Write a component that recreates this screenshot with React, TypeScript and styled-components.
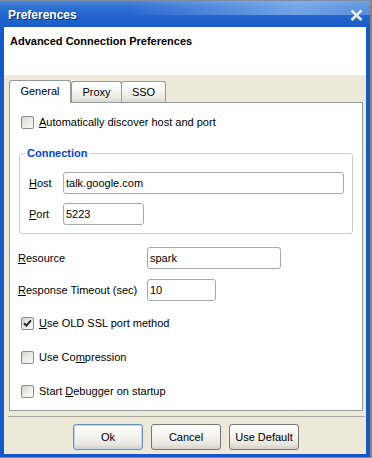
import React, { FC } from "react";
import styled, { createGlobalStyle } from "styled-components";

const GlobalStyle = createGlobalStyle`
  body {
    margin: 0;
    font-family: "Liberation Sans", Arial, sans-serif;
    font-size: 11px;
    color: #000;
  }
`;

const Window = styled.div`
  width: 372px;
  height: 458px;
  box-sizing: border-box;
  display: flex;
  flex-direction: column;
  border-top: 1px solid #7d8ca3;
  border-right: 2px solid #858585;
  border-bottom: 1px solid #8a8a8a;
  background: #1559c6;
`;

const TitleBar = styled.div`
  height: 26px;
  flex: none;
  box-sizing: border-box;
  display: flex;
  align-items: center;
  justify-content: space-between;
  padding: 2px 6px 0 8px;
  background: linear-gradient(
        100deg,
        rgba(255, 255, 255, 0) 35%,
        rgba(175, 210, 248, 0.55) 80%,
        rgba(175, 210, 248, 0.35) 100%
      )
      top / 100% 55% no-repeat,
    linear-gradient(to bottom, #4f88da 0%, #3172d3 20%, #2466cd 55%, #1a5dc8 100%);
`;

const Title = styled.span`
  color: #fff;
  font-weight: bold;
  font-size: 12px;
  text-shadow: 1px 1px 0 #0c2f70;
`;

const Client = styled.div`
  flex: 1;
  display: flex;
  flex-direction: column;
  border-left: 4px solid #1559c6;
  border-right: 4px solid #1559c6;
  border-bottom: 3px solid #1559c6;
`;

const Header = styled.div`
  height: 48px;
  flex: none;
  box-sizing: border-box;
  padding: 7px 6px 0;
  background: #fff;
  font-weight: bold;
  line-height: 14px;
`;

const Body = styled.div`
  flex: 1;
  display: flex;
  flex-direction: column;
  padding: 5px 3px 4px 5px;
  background: #ece9d8;
`;

const TabRow = styled.div`
  display: flex;
  align-items: flex-end;
  height: 22px;
`;

const Tab = styled.div<{ $active?: boolean; $width: number; $shift?: number }>`
  box-sizing: border-box;
  width: ${(p) => p.$width}px;
  height: ${(p) => (p.$active ? 23 : 21)}px;
  margin-bottom: ${(p) => (p.$active ? -1 : 0)}px;
  margin-left: ${(p) => p.$shift ?? 0}px;
  position: relative;
  z-index: ${(p) => (p.$active ? 1 : 0)};
  display: flex;
  align-items: center;
  justify-content: center;
  padding-bottom: ${(p) => (p.$active ? 2 : 0)}px;
  border: 1px solid #919b9c;
  border-bottom: none;
  border-radius: 3px 3px 0 0;
  background: ${(p) =>
    p.$active
      ? "#fff"
      : "linear-gradient(to bottom, #fff 0%, #f6f5f1 45%, #e9e7df 80%, #dcd9ce 100%)"};
`;

const Panel = styled.div`
  height: 309px;
  box-sizing: border-box;
  border: 1px solid #919b9c;
  background: #fff;
  display: flex;
  flex-direction: column;
`;

const CheckRow = styled.label<{ $top: number }>`
  display: flex;
  align-items: center;
  gap: 5px;
  height: 14px;
  margin-top: ${(p) => p.$top}px;
  padding-left: 11px;
  line-height: 14px;
`;

const Box = styled.span`
  width: 13px;
  height: 13px;
  box-sizing: border-box;
  border: 1px solid #8b8b88;
  border-radius: 2px;
  background: linear-gradient(135deg, #d4d1c8 0%, #ebeae5 45%, #f9f9f7 100%);
  display: flex;
  align-items: center;
  justify-content: center;
`;

const Group = styled.fieldset`
  width: 334px;
  box-sizing: border-box;
  margin: 18px 0 0 9px;
  padding: 0 0 8px;
  border: 1px solid #d0d0bf;
  border-radius: 3px;
  min-inline-size: 0;
`;

const Legend = styled.legend`
  margin-left: 5px;
  padding: 0 2px;
  color: #0046d5;
  font-weight: bold;
  line-height: 13px;
`;

const FieldRow = styled.div<{ $top: number; $indent: number }>`
  display: flex;
  align-items: center;
  height: 22px;
  margin-top: ${(p) => p.$top}px;
  padding-left: ${(p) => p.$indent}px;
`;

const Label = styled.span<{ $width: number }>`
  width: ${(p) => p.$width}px;
  flex: none;
`;

const Input = styled.input<{ $width: number }>`
  width: ${(p) => p.$width}px;
  height: 22px;
  box-sizing: border-box;
  margin: 0;
  padding: 0 2px;
  border: 1px solid #a3a9b1;
  border-radius: 3px;
  font: inherit;
  color: #000;
  background: #fff;
  outline: none;
`;

const Separator = styled.div`
  height: 1px;
  margin: 5px -2px 0 -1px;
  background: #aca9a2;
`;

const ButtonRow = styled.div`
  display: flex;
  justify-content: center;
  gap: 8px;
  margin-top: 7px;
`;

const Button = styled.button<{ $default?: boolean }>`
  width: 70px;
  height: 26px;
  box-sizing: border-box;
  margin: 0;
  padding: 0;
  font: inherit;
  color: #000;
  border: 1px solid ${(p) => (p.$default ? "#6a8cc2" : "#767676")};
  border-radius: 3px;
  box-shadow: ${(p) => (p.$default ? "inset 0 0 0 1px #c4d7f1" : "none")};
  background: linear-gradient(to bottom, #ffffff 0%, #f4f4f0 45%, #e8e6df 80%, #d5d0c6 100%);
`;

const Check: FC<{ checked?: boolean }> = ({ checked }) => (
  <Box>
    {checked && (
      <svg width="11" height="11" viewBox="0 0 11 11">
        <path d="M2 5.2 L4.3 7.6 L9 2.4" fill="none" stroke="#222" strokeWidth="2" />
      </svg>
    )}
  </Box>
);

const CloseIcon: FC = () => (
  <svg width="15" height="13" viewBox="0 0 15 13">
    <path d="M2.5 2 L12.5 11.5 M12.5 2 L2.5 11.5" stroke="#4f73ad" strokeWidth="3.4" />
    <path d="M2.5 1.5 L12.5 11 M12.5 1.5 L2.5 11" stroke="#e6eaf0" strokeWidth="2.6" />
  </svg>
);

export default function App() {
  return (
    <>
      <GlobalStyle />
      <Window>
        <TitleBar>
          <Title>Preferences</Title>
          <CloseIcon />
        </TitleBar>
        <Client>
          <Header>Advanced Connection Preferences</Header>
          <Body>
            <TabRow>
              <Tab $active $width={62}>General</Tab>
              <Tab $width={51}>Proxy</Tab>
              <Tab $width={45} $shift={-1}>SSO</Tab>
            </TabRow>
            <Panel>
              <CheckRow $top={12}>
                <Check />
                <span>
                  <u>A</u>utomatically discover host and port
                </span>
              </CheckRow>
              <Group>
                <Legend>Connection</Legend>
                <FieldRow $top={12} $indent={9}>
                  <Label $width={34}>
                    <u>H</u>ost
                  </Label>
                  <Input $width={281} readOnly defaultValue="talk.google.com" />
                </FieldRow>
                <FieldRow $top={9} $indent={9}>
                  <Label $width={34}>
                    <u>P</u>ort
                  </Label>
                  <Input $width={81} readOnly defaultValue="5223" />
                </FieldRow>
              </Group>
              <FieldRow $top={13} $indent={8}>
                <Label $width={129}>
                  <u>R</u>esource
                </Label>
                <Input $width={134} readOnly defaultValue="spark" />
              </FieldRow>
              <FieldRow $top={10} $indent={8}>
                <Label $width={129}>
                  <u>R</u>esponse Timeout (sec)
                </Label>
                <Input $width={69} readOnly defaultValue="10" />
              </FieldRow>
              <CheckRow $top={15}>
                <Check checked />
                <span>
                  <u>U</u>se OLD SSL port method
                </span>
              </CheckRow>
              <CheckRow $top={20}>
                <Check />
                <span>
                  Use Co<u>m</u>pression
                </span>
              </CheckRow>
              <CheckRow $top={20}>
                <Check />
                <span>
                  Start <u>D</u>ebugger on startup
                </span>
              </CheckRow>
            </Panel>
            <Separator />
            <ButtonRow>
              <Button $default>Ok</Button>
              <Button>Cancel</Button>
              <Button>Use Default</Button>
            </ButtonRow>
          </Body>
        </Client>
      </Window>
    </>
  );
}
